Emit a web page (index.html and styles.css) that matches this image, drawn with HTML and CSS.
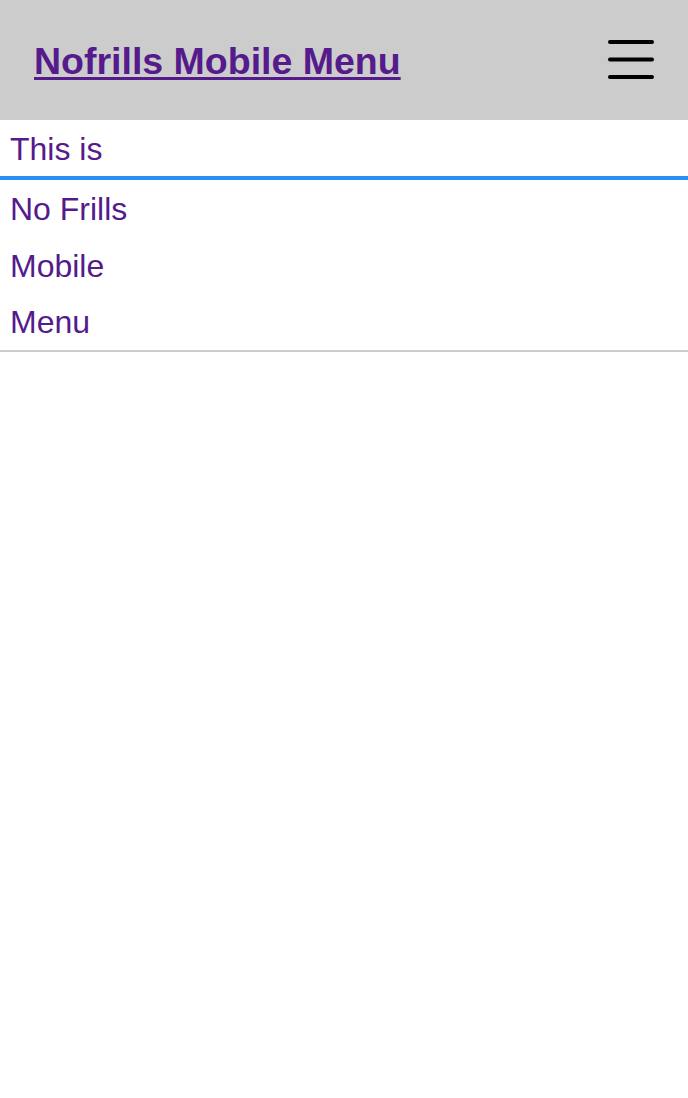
FILE: index.html
```html
<!DOCTYPE html>
<html lang="en">
<head>
<meta charset="utf-8">
<title>Nofrills Mobile Menu</title>
<link rel="stylesheet" href="styles.css">
</head>
<body>
<header class="topbar">
  <h1 class="title"><a href="#" class="title-link">Nofrills Mobile Menu</a></h1>
  <button class="burger" aria-label="Menu">
    <svg width="50" height="44" viewBox="0 0 50 44">
      <g stroke="#000" stroke-width="4" stroke-linecap="round">
        <line x1="4" y1="5" x2="46" y2="5"/>
        <line x1="4" y1="22.5" x2="46" y2="22.5"/>
        <line x1="4" y1="40" x2="46" y2="40"/>
      </g>
    </svg>
  </button>
</header>
<nav class="menu">
  <a href="#" class="menu-item menu-item--first">This is</a>
  <a href="#" class="menu-item menu-item--a">No Frills</a>
  <a href="#" class="menu-item menu-item--b">Mobile</a>
  <a href="#" class="menu-item menu-item--a">Menu</a>
</nav>
</body>
</html>
```
FILE: styles.css
```css
html, body {
  margin: 0;
  padding: 0;
  background: #fff;
  font-family: "Liberation Sans", Arial, sans-serif;
}
.topbar {
  height: 120px;
  background: #cccccc;
  display: flex;
  align-items: center;
  justify-content: space-between;
  padding: 0 32px 0 34px;
  box-sizing: border-box;
}
.title {
  margin: 3px 0 0 0;
  font-size: 37.5px;
  font-weight: bold;
  line-height: 1;
}
.title-link {
  color: #551a8b;
  text-decoration: underline;
  text-underline-offset: 3px;
  text-decoration-thickness: 3px;
}
.burger {
  border: 0;
  background: none;
  padding: 0;
  margin: 0;
  display: flex;
  margin-top: -2px;
}
.menu {
  display: flex;
  flex-direction: column;
  border-bottom: 2px solid #cccccc;
}
.menu-item {
  display: block;
  color: #551a8b;
  text-decoration: none;
  font-size: 32px;
  padding-left: 10px;
  padding-top: 1px;
  box-sizing: border-box;
}
.menu-item--first {
  height: 56px;
  line-height: 56px;
  border-bottom: 4px solid #2a8ef5;
  box-sizing: content-box;
  padding-top: 0;
}
.menu-item--first::first-line {
  line-height: 58px;
}
.menu-item--a {
  height: 57px;
  line-height: 57px;
}
.menu-item--b {
  height: 56px;
  line-height: 56px;
}
```
